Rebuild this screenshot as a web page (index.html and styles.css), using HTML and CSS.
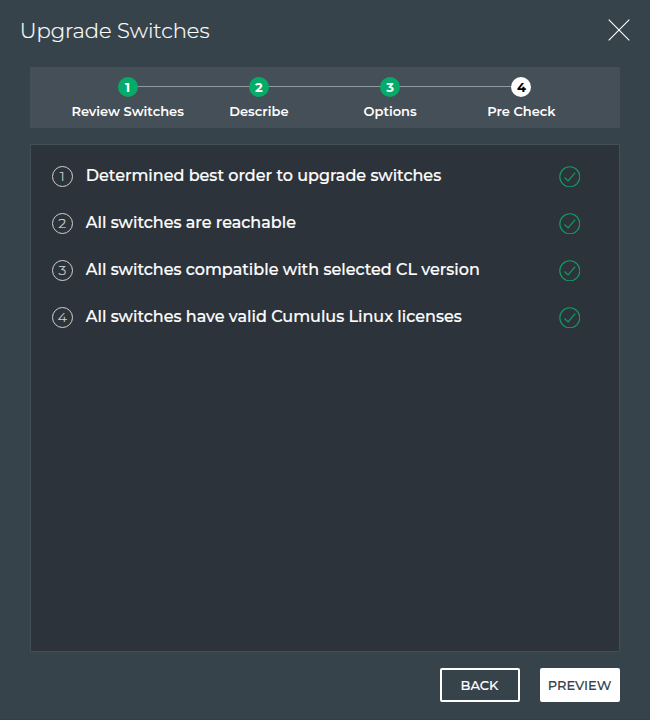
FILE: index.html
```html
<!DOCTYPE html>
<html lang="en">
<head>
<meta charset="utf-8">
<title>Upgrade Switches</title>
<link rel="stylesheet" href="styles.css">
</head>
<body>
<main class="dialog">
  <header class="header">
    <h1 class="title">Upgrade Switches</h1>
    <svg class="close" viewBox="0 0 22 22"><path d="M.7.7 21.3 21.3M21.3.7.7 21.3"/></svg>
  </header>
  <ol class="stepper">
    <li class="step"><span class="dot">1</span><span class="label">Review Switches</span></li>
    <li class="step"><span class="dot">2</span><span class="label">Describe</span></li>
    <li class="step"><span class="dot">3</span><span class="label">Options</span></li>
    <li class="step current"><span class="dot">4</span><span class="label">Pre Check</span></li>
  </ol>
  <ul class="checks">
    <li class="check"><span class="num">1</span><span class="text">Determined best order to upgrade switches</span><svg class="ok" viewBox="0 0 22 22"><circle cx="11" cy="11" r="10.2"/><path d="M5.6 11.7 9.3 15.2 16.5 6.7"/></svg></li>
    <li class="check"><span class="num">2</span><span class="text">All switches are reachable</span><svg class="ok" viewBox="0 0 22 22"><circle cx="11" cy="11" r="10.2"/><path d="M5.6 11.7 9.3 15.2 16.5 6.7"/></svg></li>
    <li class="check"><span class="num">3</span><span class="text">All switches compatible with selected CL version</span><svg class="ok" viewBox="0 0 22 22"><circle cx="11" cy="11" r="10.2"/><path d="M5.6 11.7 9.3 15.2 16.5 6.7"/></svg></li>
    <li class="check"><span class="num">4</span><span class="text">All switches have valid Cumulus Linux licenses</span><svg class="ok" viewBox="0 0 22 22"><circle cx="11" cy="11" r="10.2"/><path d="M5.6 11.7 9.3 15.2 16.5 6.7"/></svg></li>
  </ul>
  <footer class="footer">
    <button class="btn back">BACK</button>
    <button class="btn preview">PREVIEW</button>
  </footer>
</main>
</body>
</html>
```
FILE: styles.css
```css
* { box-sizing: border-box; }
body { margin: 0; background: #37434b; color: #fff; font-family: Montserrat, Inter, sans-serif; }
ol, ul { list-style: none; margin: 0; padding: 0; }
.dialog { height: 720px; padding: 0 30px; display: flex; flex-direction: column; border-bottom: 1px solid #343e47; }
.header { height: 67px; margin: 0 -10.4px 0 -10.3px; display: flex; justify-content: space-between; }
.title { margin: 17px 0 0; font-size: 21.1px; line-height: 28px; font-weight: 300; white-space: nowrap; -webkit-text-stroke: .2px #fff; }
.close { width: 22px; height: 22px; margin-top: 19.4px; stroke: #fff; stroke-width: 1.1; fill: none; }
.stepper { height: 61px; padding: 10px 33px 0 32px; background: #454f57; display: flex; }
.step { position: relative; flex: 1; display: flex; flex-direction: column; align-items: center; }
.step + .step::before { content: ""; position: absolute; top: 9px; right: 50%; width: 100%; height: 1px; background: #929a9f; }
.dot { position: relative; z-index: 1; width: 20px; height: 20px; border-radius: 50%; background: #05ab69; text-align: center; font-size: 13px; line-height: 20px; font-weight: 700; }
.current .dot { background: #fff; color: #000; }
.label { margin-top: 5px; font-size: 13px; line-height: 18px; font-weight: 600; white-space: nowrap; }
.checks { height: 508px; margin-top: 16px; padding: 20.5px 38.9px 0 20.8px; background: #2c333b; border: 1px solid #434f57; }
.check { height: 22px; margin-bottom: 25px; display: flex; align-items: center; }
.num { width: 21px; height: 21px; border: 1px solid #d0d3d5; border-radius: 50%; text-align: center; color: #d0d3d5; font-size: 14px; line-height: 19px; font-weight: 300; -webkit-text-stroke: .2px #d0d3d5; }
.text { margin: -2px auto 0 13px; font-size: 16px; line-height: 22px; font-weight: 500; white-space: nowrap; -webkit-text-stroke: .2px #fff; }
.ok { width: 21.6px; height: 21.6px; margin-top: -.4px; fill: none; stroke: #159963; stroke-width: 1.2; }
.footer { margin-top: 16px; display: flex; justify-content: flex-end; gap: 20px; }
.btn { width: 80px; height: 34px; padding: 0 1px 0 0; border: 2px solid #fff; border-radius: 2px; background: transparent; color: #fff; font: 500 13px/30px Montserrat, Inter, sans-serif; -webkit-text-stroke: .15px currentColor; }
.preview { background: #fff; color: #37434b; }
```
